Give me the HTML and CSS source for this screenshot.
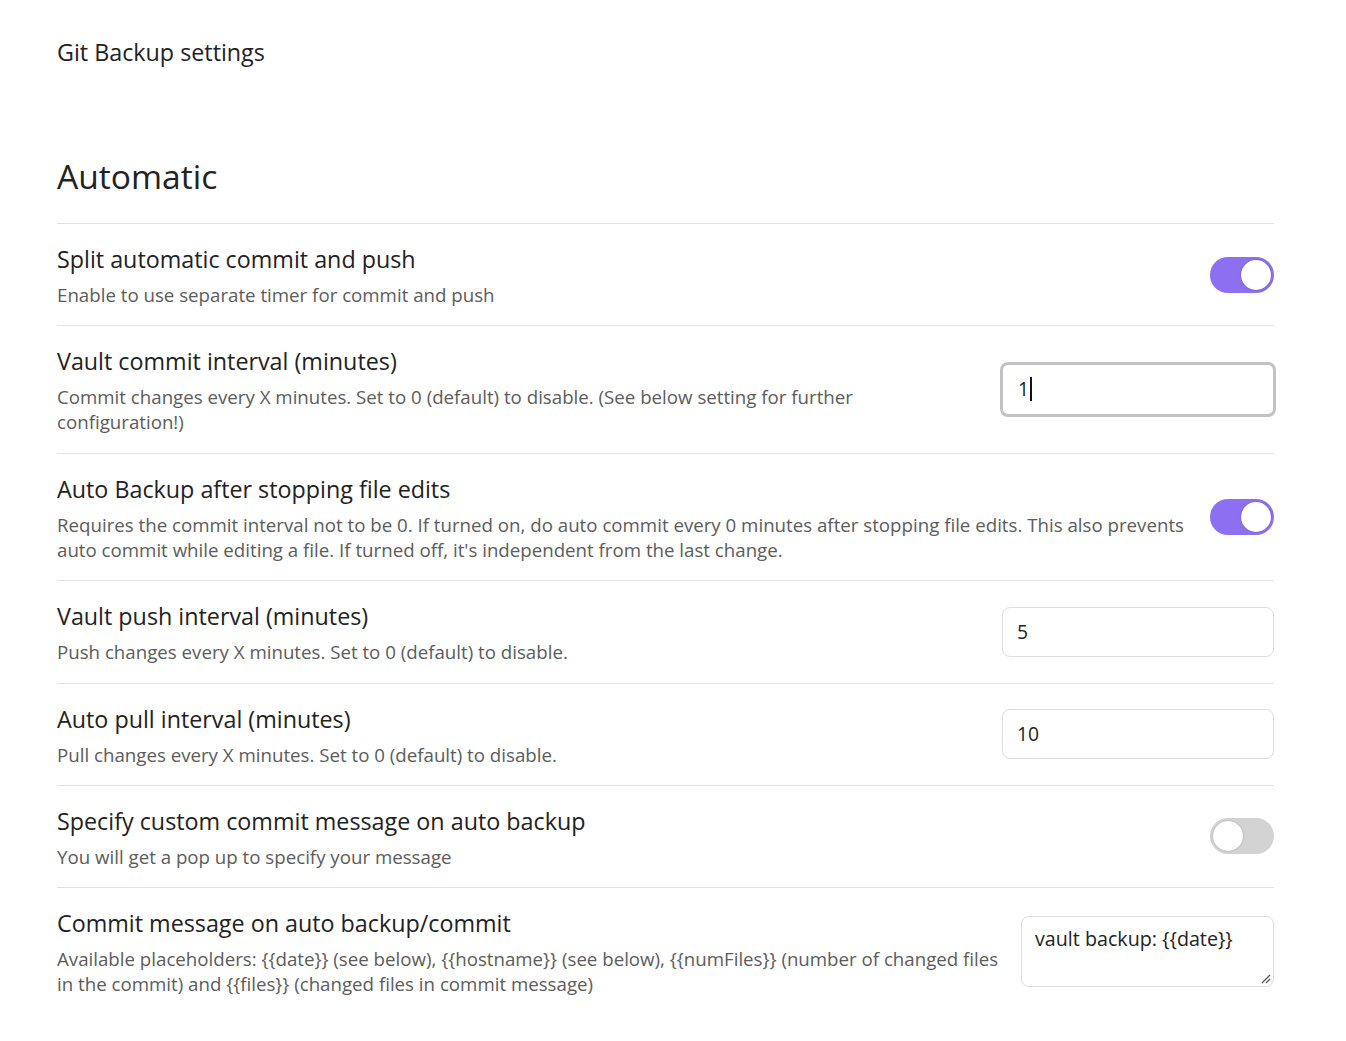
FILE: index.html
```html
<!DOCTYPE html>
<html>
<head>
<meta charset="utf-8">
<link rel="stylesheet" href="styles.css">
</head>
<body>
<div class="page">
  <h1 class="page-title">Git Backup settings</h1>
  <h2 class="section-title">Automatic</h2>

  <div class="setting">
    <div class="info">
      <div class="name">Split automatic commit and push</div>
      <div class="desc">Enable to use separate timer for commit and push</div>
    </div>
    <div class="control"><div class="toggle on"><span class="knob"></span></div></div>
  </div>

  <div class="setting">
    <div class="info">
      <div class="name">Vault commit interval (minutes)</div>
      <div class="desc narrow">Commit changes every X minutes. Set to 0 (default) to disable. (See below setting for further configuration!)</div>
    </div>
    <div class="control"><div class="input focused">1<span class="caret"></span></div></div>
  </div>

  <div class="setting">
    <div class="info">
      <div class="name">Auto Backup after stopping file edits</div>
      <div class="desc">Requires the commit interval not to be 0. If turned on, do auto commit every 0 minutes after stopping file edits. This also prevents auto commit while editing a file. If turned off, it's independent from the last change.</div>
    </div>
    <div class="control"><div class="toggle on"><span class="knob"></span></div></div>
  </div>

  <div class="setting">
    <div class="info">
      <div class="name">Vault push interval (minutes)</div>
      <div class="desc">Push changes every X minutes. Set to 0 (default) to disable.</div>
    </div>
    <div class="control"><div class="input">5</div></div>
  </div>

  <div class="setting">
    <div class="info">
      <div class="name">Auto pull interval (minutes)</div>
      <div class="desc">Pull changes every X minutes. Set to 0 (default) to disable.</div>
    </div>
    <div class="control"><div class="input">10</div></div>
  </div>

  <div class="setting">
    <div class="info">
      <div class="name">Specify custom commit message on auto backup</div>
      <div class="desc">You will get a pop up to specify your message</div>
    </div>
    <div class="control"><div class="toggle"><span class="knob"></span></div></div>
  </div>

  <div class="setting last">
    <div class="info">
      <div class="name">Commit message on auto backup/commit</div>
      <div class="desc">Available placeholders: {{date}} (see below), {{hostname}} (see below), {{numFiles}} (number of changed files in the commit) and {{files}} (changed files in commit message)</div>
    </div>
    <div class="control top">
      <div class="textarea">vault backup: {{date}}
        <svg class="grip" width="12" height="12" viewBox="0 0 12 12"><path d="M11 3 L3 11 M11 7 L7 11" stroke="#555" stroke-width="1.2" fill="none"/></svg>
      </div>
    </div>
  </div>
</div>
</body>
</html>
```

FILE: styles.css
```css
* { box-sizing: border-box; }
html, body { margin: 0; padding: 0; background: #ffffff; }
body {
  font-family: "Open Sans", "Noto Sans", sans-serif;
  color: #222222;
}
.page {
  padding: 34px 72px 0 57px;
}
.page-title {
  margin: 0;
  font-size: 23.3px;
  font-weight: 500;
  line-height: 36px;
  color: #222222;
}
.section-title {
  margin: 84px 0 0 0;
  font-size: 33.6px;
  font-weight: 500;
  line-height: 44px;
  padding-bottom: 25px;
  color: #222222;
}
.setting {
  display: flex;
  align-items: center;
  border-top: 1px solid #e3e3e3;
  padding: 18px 0 18.4px 0;
  gap: 24px;
}
.setting.last { gap: 10px; }
.info { flex: 1 1 auto; min-width: 0; }
.desc.narrow { max-width: 820px; }
.name {
  font-size: 23.3px;
  line-height: 34px;
  color: #222222;
}
.desc {
  margin-top: 6px;
  font-size: 18.7px;
  line-height: 25px;
  color: #5c5c5c;
}
.control { flex: 0 0 auto; display: flex; justify-content: flex-end; }
.control.top { align-self: flex-start; margin-top: 10px; }
.toggle {
  width: 64px;
  height: 36px;
  border-radius: 18px;
  background: #d3d3d3;
  position: relative;
}
.toggle.on { background: #8d6ff1; }
.toggle .knob {
  position: absolute;
  top: 3px;
  left: 3px;
  width: 30px;
  height: 30px;
  border-radius: 50%;
  background: #fff;
  box-shadow: 0 0 2px rgba(0,0,0,0.25);
}
.toggle.on .knob { left: 31px; }
.input {
  width: 272px;
  height: 50px;
  border: 1px solid #dedede;
  border-radius: 8px;
  padding: 0 14px;
  font-size: 19.3px;
  line-height: 48px;
  color: #222222;
  display: flex;
  align-items: center;
}
.input.focused {
  width: 276px;
  height: 55px;
  margin-right: -2px;
  border: 3px solid #c2c2c2;
  padding: 0 15px;
}
.caret {
  display: inline-block;
  width: 2px;
  height: 24px;
  background: #111;
  margin-left: 1px;
}
.textarea {
  position: relative;
  width: 253px;
  height: 71px;
  border: 1px solid #dedede;
  border-radius: 8px;
  padding: 6px 13px;
  font-size: 19.7px;
  line-height: 32px;
  color: #222222;
}
.grip { position: absolute; right: 2px; bottom: 2px; }
```
